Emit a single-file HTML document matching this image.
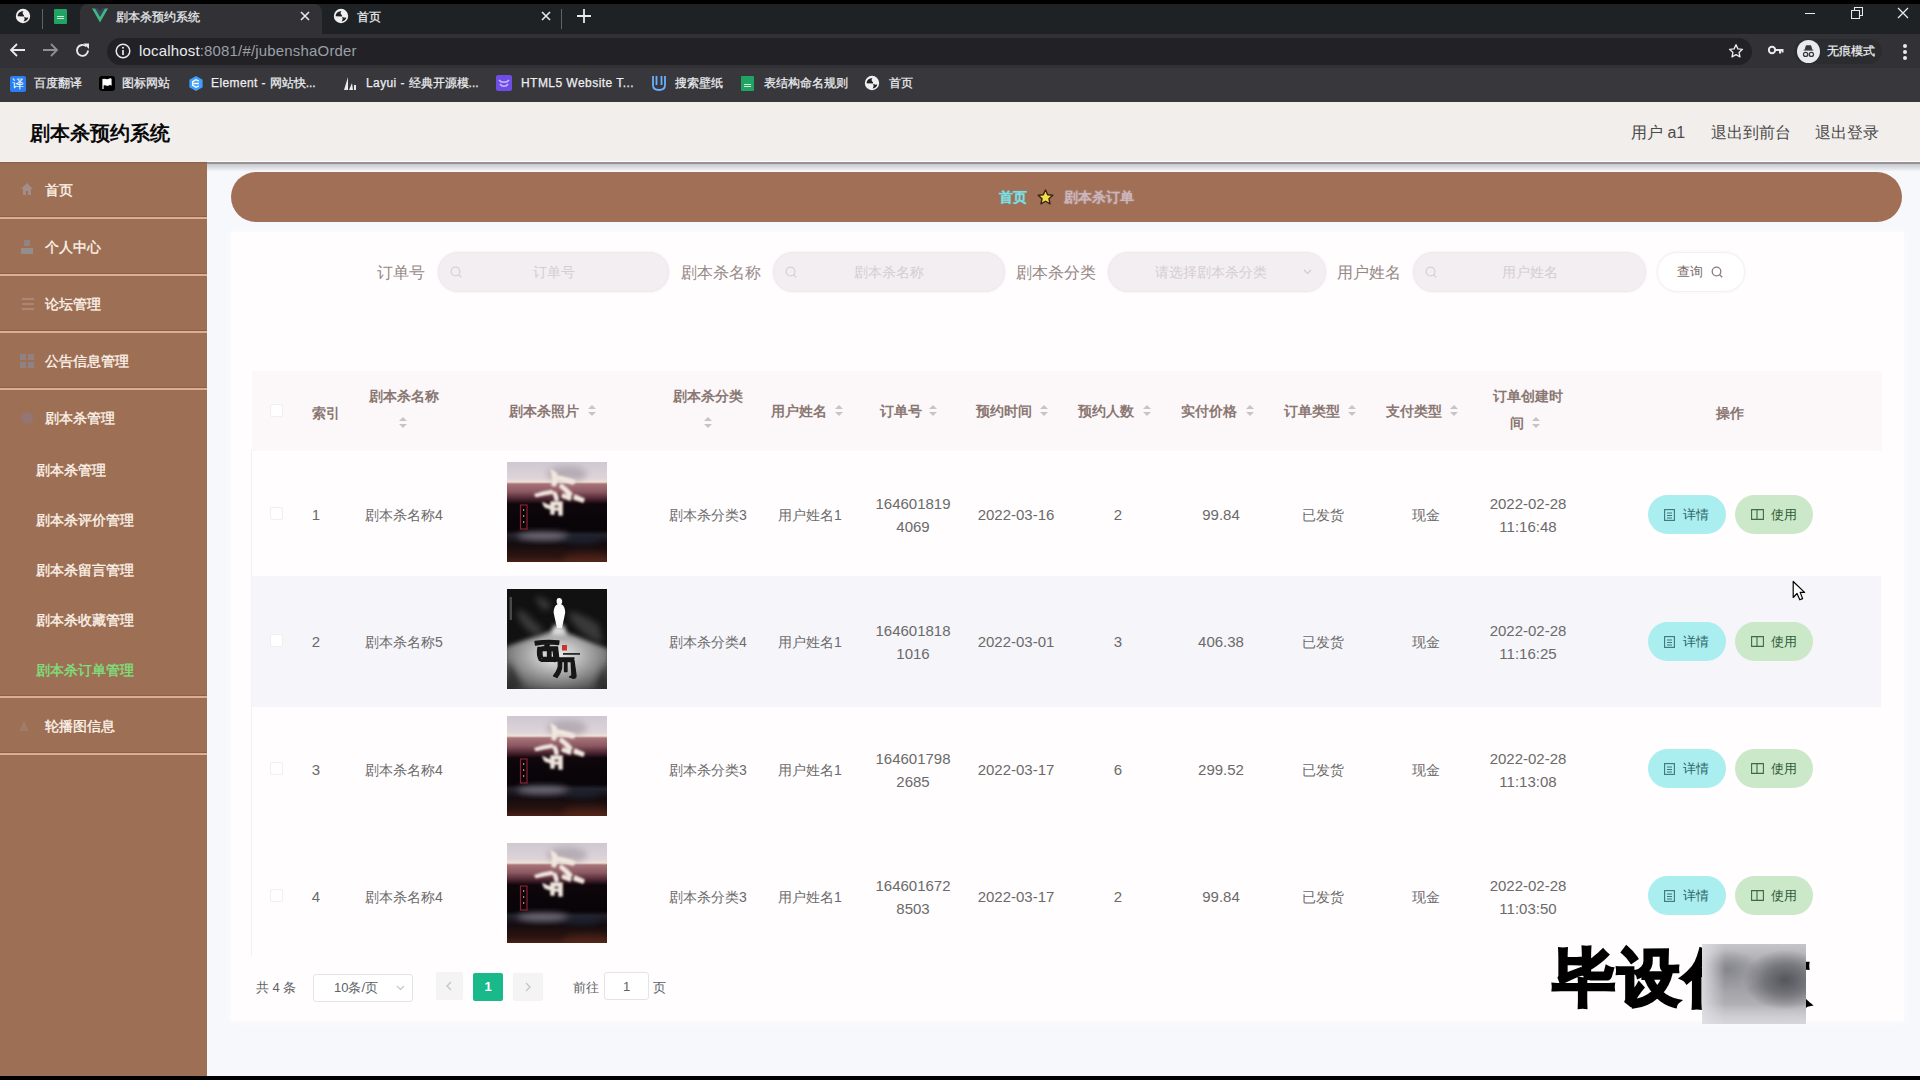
<!DOCTYPE html><html><head><meta charset="utf-8"><style>
*{box-sizing:border-box;margin:0;padding:0}
html,body{width:1920px;height:1080px;overflow:hidden;background:#f7f8fc;font-family:"Liberation Sans",sans-serif;position:relative}
.a{position:absolute;white-space:nowrap}
.ct{position:absolute;white-space:nowrap;color:#eceef0;font-size:12px;line-height:12px;-webkit-text-stroke:.25px currentColor}
.mi{position:absolute;white-space:nowrap;color:#fdf3ea;font-size:14px;line-height:14px;-webkit-text-stroke:.35px currentColor}
.sep{position:absolute;left:0;width:207px;height:2px;background:#dcae93;box-shadow:0 -1px 0 #8e5e47}
.lbl{position:absolute;white-space:nowrap;color:#958886;font-size:16px;line-height:16px}
.inp{position:absolute;height:40px;border-radius:20px;background:#f3eef1;border:1px solid #efe9ec;box-shadow:0 0 3px #f0eaee}
.ph{position:absolute;white-space:nowrap;color:#d6cdd1;font-size:14px;line-height:14px;text-align:center}
.th{position:absolute;white-space:nowrap;color:#8a7773;font-size:14px;font-weight:bold;line-height:14px}
.td{position:absolute;white-space:nowrap;color:#6a6a6a;font-size:14px;line-height:14px;text-align:center;width:140px}
.num{font-size:15px;line-height:15px}
.sort{position:absolute;width:8px;height:11px}
.sort:before{content:"";position:absolute;left:0;top:0;border-left:4px solid transparent;border-right:4px solid transparent;border-bottom:4px solid #c8c3c5}
.sort:after{content:"";position:absolute;left:0;top:7px;border-left:4px solid transparent;border-right:4px solid transparent;border-top:4px solid #c8c3c5}
.cb{position:absolute;width:13px;height:13px;border:1px solid #f1eef0;border-radius:2px;background:#fff}
.img{position:absolute;width:100px;height:100px;overflow:hidden}
.btn{position:absolute;height:39px;width:78px;border-radius:20px}
.bt{position:absolute;white-space:nowrap;font-size:13px;line-height:13px}
</style></head><body>
<div class="a" style="left:0;top:0;width:1920px;height:102px;background:#38373c"></div>
<div class="a" style="left:0;top:0;width:1920px;height:34px;background:#1f2225"></div>
<div class="a" style="left:0;top:34px;width:1920px;height:34px;background:#323236"></div>
<div class="a" style="left:0;top:0;width:1920px;height:4px;background:#000"></div>
<div class="a" style="left:80px;top:4px;width:242px;height:31px;background:#323236;border-radius:8px 8px 0 0"></div>
<div class="a" style="left:42px;top:9px;width:1px;height:20px;background:#5f6368"></div>
<div class="a" style="left:561px;top:9px;width:1px;height:20px;background:#5f6368"></div>
<svg class="a" style="left:15px;top:8px" width="16" height="16" viewBox="0 0 16 16"><circle cx="8" cy="8" r="7.2" fill="#f0f0f0"/><path d="M2.6 8.3C2.8 5.2 5 3.1 8.6 3c-1 1-1.4 2.4-.3 3.6.7.8 1 1.3.6 1.9z" fill="#202124"/><path d="M8.9 8.6c.9.9 2.6 1.3 4.4.9-.4 2.2-2 3.7-4.8 3.9 1.3-1.2 1.5-2.8.4-4.8z" fill="#202124"/></svg>
<div class="a" style="left:54px;top:9px;width:13px;height:15px;background:#1fa463;border-radius:1px"></div>
<div class="a" style="left:57px;top:16px;width:7px;height:1px;background:#d0f0dc"></div><div class="a" style="left:57px;top:18px;width:7px;height:1px;background:#d0f0dc"></div>
<svg class="a" style="left:92px;top:8px" width="16" height="15" viewBox="0 0 16 14"><path d="M0 0h3.2L8 8.2 12.8 0H16L8 14z" fill="#41b883"/><path d="M3.2 0h2.9L8 3.3 9.9 0h2.9L8 8.2z" fill="#35495e"/></svg>
<div class="ct" style="left:116px;top:11px;color:#e8eaed">剧本杀预约系统</div>
<svg class="a" style="left:300px;top:11px" width="10" height="10"><path d="M1 1L9 9M9 1L1 9" stroke="#e8eaed" stroke-width="1.6"/></svg>
<svg class="a" style="left:333px;top:8px" width="16" height="16" viewBox="0 0 16 16"><circle cx="8" cy="8" r="7.2" fill="#f0f0f0"/><path d="M2.6 8.3C2.8 5.2 5 3.1 8.6 3c-1 1-1.4 2.4-.3 3.6.7.8 1 1.3.6 1.9z" fill="#202124"/><path d="M8.9 8.6c.9.9 2.6 1.3 4.4.9-.4 2.2-2 3.7-4.8 3.9 1.3-1.2 1.5-2.8.4-4.8z" fill="#202124"/></svg>
<div class="ct" style="left:357px;top:11px">首页</div>
<svg class="a" style="left:541px;top:11px" width="10" height="10"><path d="M1 1L9 9M9 1L1 9" stroke="#e8eaed" stroke-width="1.6"/></svg>
<svg class="a" style="left:577px;top:9px" width="14" height="14"><path d="M7 0v14M0 7h14" stroke="#e8eaed" stroke-width="1.8"/></svg>
<div class="a" style="left:1805px;top:13px;width:10px;height:1px;background:#e8eaed"></div>
<svg class="a" style="left:1851px;top:7px" width="12" height="12"><path d="M0.5 3.5h8v8h-8z M3.5 3.5v-3h8v8h-3" stroke="#e8eaed" stroke-width="1.1" fill="none"/></svg>
<svg class="a" style="left:1897px;top:7px" width="12" height="12"><path d="M1 1L11 11M11 1L1 11" stroke="#e8eaed" stroke-width="1.3"/></svg>
<svg class="a" style="left:9px;top:42px" width="17" height="16" viewBox="0 0 17 16"><path d="M16 8H2M8 2L2 8l6 6" stroke="#e8eaed" stroke-width="1.8" fill="none"/></svg>
<svg class="a" style="left:42px;top:42px" width="17" height="16" viewBox="0 0 17 16"><path d="M1 8h14M9 2l6 6-6 6" stroke="#8f9094" stroke-width="1.8" fill="none"/></svg>
<svg class="a" style="left:74px;top:42px" width="17" height="17" viewBox="0 0 17 17"><path d="M14 8.5A5.5 5.5 0 1 1 12.2 4.3" stroke="#e8eaed" stroke-width="1.9" fill="none"/><path d="M9.5 1.5h5.5v5.5z" fill="#e8eaed"/></svg>
<div class="a" style="left:107px;top:38px;width:1645px;height:27px;border-radius:14px;background:#222126"></div>
<svg class="a" style="left:115px;top:43px" width="16" height="16" viewBox="0 0 16 16"><circle cx="8" cy="8" r="6.8" stroke="#e8eaed" stroke-width="1.5" fill="none"/><path d="M8 7v5" stroke="#e8eaed" stroke-width="1.7"/><circle cx="8" cy="4.7" r="1" fill="#e8eaed"/></svg>
<div class="a" style="left:139px;top:43px;font-size:15px;line-height:15px;letter-spacing:.17px;color:#e8eaed">localhost<span style="color:#9aa0a6">:8081/#/jubenshaOrder</span></div>
<svg class="a" style="left:1728px;top:43px" width="16" height="16" viewBox="0 0 24 24"><path d="M12 2.5l2.9 6.3 6.8.7-5.1 4.6 1.4 6.8L12 17.4l-6 3.5 1.4-6.8-5.1-4.6 6.8-.7z" stroke="#e8eaed" stroke-width="2" fill="none" stroke-linejoin="round"/></svg>
<svg class="a" style="left:1768px;top:45px" width="16" height="11" viewBox="0 0 16 11"><circle cx="4" cy="5" r="3.2" stroke="#e8eaed" stroke-width="2" fill="none"/><path d="M7 5h8.5M12 5v3.5M14.5 5v2.5" stroke="#e8eaed" stroke-width="2"/></svg>
<div class="a" style="left:1794px;top:39px;width:88px;height:25px;border-radius:13px;background:#2b2c2f"></div>
<svg class="a" style="left:1797px;top:40px" width="23" height="23" viewBox="0 0 24 24"><circle cx="12" cy="12" r="12" fill="#e8eaed"/><path d="M7 10.5h10M8.5 10l1.2-4h4.6l1.2 4z" stroke="#35363a" fill="#35363a" stroke-width="1"/><circle cx="9" cy="15" r="2.2" stroke="#35363a" stroke-width="1.3" fill="none"/><circle cx="15" cy="15" r="2.2" stroke="#35363a" stroke-width="1.3" fill="none"/></svg>
<div class="ct" style="left:1827px;top:45px">无痕模式</div>
<div class="a" style="left:1903px;top:44px;width:4px;height:4px;border-radius:2px;background:#e8eaed"></div><div class="a" style="left:1903px;top:50px;width:4px;height:4px;border-radius:2px;background:#e8eaed"></div><div class="a" style="left:1903px;top:56px;width:4px;height:4px;border-radius:2px;background:#e8eaed"></div>
<div class="a" style="left:10px;top:76px;width:16px;height:16px;background:#2a7ff0;border-radius:2px;color:#fff;font-size:12px;line-height:16px;text-align:center">译</div>
<div class="ct" style="left:34px;top:77px">百度翻译</div>
<svg class="a" style="left:99px;top:76px" width="16" height="15" viewBox="0 0 16 15"><rect width="16" height="15" rx="3" fill="#000"/><path d="M4 3v10M4 3.5c2-1 3.5 1 5.5 0s2.5-.3 2.5-.3v5.5s-1-.5-2.5.3-3.5-1-5.5 0" stroke="#fff" stroke-width="1.2" fill="#fff"/></svg>
<div class="ct" style="left:122px;top:77px">图标网站</div>
<svg class="a" style="left:188px;top:75px" width="16" height="17" viewBox="0 0 16 18"><path d="M8 1l7 4v8l-7 4-7-4V5z" fill="#409eff"/><path d="M11 6.5L8 5 4.5 7v4L8 13l3-1.5M5.5 9H11" stroke="#fff" stroke-width="1.4" fill="none"/></svg>
<div class="ct" style="left:211px;top:77px"><span style="letter-spacing:.4px">Element - </span>网站快...</div>
<svg class="a" style="left:343px;top:76px" width="14" height="15" viewBox="0 0 14 15"><path d="M1 14L5 1v13z M6 14l3-7 1 7z M11 9h2v5h-2z" fill="#e8eaed"/></svg>
<div class="ct" style="left:366px;top:77px"><span style="letter-spacing:.4px">Layui - </span>经典开源模...</div>
<svg class="a" style="left:496px;top:75px" width="16" height="16" viewBox="0 0 16 16"><rect width="16" height="16" rx="2" fill="#6f4ee8"/><path d="M3 5c2 3 8 3 10 0M4 9c2 3 6 3 8 0" stroke="#c8b8ff" stroke-width="1.5" fill="none"/></svg>
<div class="ct" style="left:521px;top:77px;letter-spacing:.45px">HTML5 Website T...</div>
<svg class="a" style="left:651px;top:75px" width="16" height="16" viewBox="0 0 16 16"><path d="M2 1v9c0 3 2 5 6 5s6-2 6-5V1M5.5 1v9M10.5 1v9" stroke="#6ab0ff" stroke-width="1.8" fill="none"/></svg>
<div class="ct" style="left:675px;top:77px">搜索壁纸</div>
<div class="a" style="left:741px;top:76px;width:13px;height:15px;background:#1fa463;border-radius:1px"></div><div class="a" style="left:744px;top:84px;width:7px;height:1px;background:#d0f0dc"></div><div class="a" style="left:744px;top:86px;width:7px;height:1px;background:#d0f0dc"></div>
<div class="ct" style="left:764px;top:77px">表结构命名规则</div>
<svg class="a" style="left:864px;top:75px" width="16" height="16" viewBox="0 0 16 16"><circle cx="8" cy="8" r="7.2" fill="#f0f0f0"/><path d="M2.6 8.3C2.8 5.2 5 3.1 8.6 3c-1 1-1.4 2.4-.3 3.6.7.8 1 1.3.6 1.9z" fill="#202124"/><path d="M8.9 8.6c.9.9 2.6 1.3 4.4.9-.4 2.2-2 3.7-4.8 3.9 1.3-1.2 1.5-2.8.4-4.8z" fill="#202124"/></svg>
<div class="ct" style="left:889px;top:77px">首页</div>
<div class="a" style="left:0;top:102px;width:1920px;height:60px;background:#f2eeec"></div>
<div class="a" style="left:207px;top:161px;width:1713px;height:1px;background:#fdfbfa"></div>
<div class="a" style="left:207px;top:162px;width:1713px;height:2px;background:#979297"></div>
<div class="a" style="left:207px;top:164px;width:1713px;height:7px;background:linear-gradient(#c4c7cc,#f3f4f7)"></div>
<div class="a" style="left:30px;top:123px;font-size:20px;line-height:20px;font-weight:bold;color:#0a0a0a">剧本杀预约系统</div>
<div class="a" style="left:1631px;top:125px;font-size:16px;line-height:16px;color:#4a4a4a">用户 a1</div>
<div class="a" style="left:1711px;top:125px;font-size:16px;line-height:16px;color:#4a4a4a">退出到前台</div>
<div class="a" style="left:1815px;top:125px;font-size:16px;line-height:16px;color:#4a4a4a">退出登录</div>
<div class="a" style="left:0;top:162px;width:207px;height:914px;background:#9d7055"></div>
<div class="a" style="left:0;top:162px;width:207px;height:2px;background:linear-gradient(#84604c,#9d7055)"></div>
<div class="sep" style="top:217px"></div>
<div class="sep" style="top:274px"></div>
<div class="sep" style="top:331px"></div>
<div class="sep" style="top:388px"></div>
<div class="sep" style="top:696px"></div>
<div class="sep" style="top:753px"></div>
<div class="mi" style="left:45px;top:183px">首页</div>
<div class="mi" style="left:45px;top:240px">个人中心</div>
<div class="mi" style="left:45px;top:297px">论坛管理</div>
<div class="mi" style="left:45px;top:354px">公告信息管理</div>
<div class="mi" style="left:45px;top:411px">剧本杀管理</div>
<div class="mi" style="left:45px;top:719px">轮播图信息</div>
<div class="mi" style="left:36px;top:463px;color:#fdf3ea">剧本杀管理</div>
<div class="mi" style="left:36px;top:513px;color:#fdf3ea">剧本杀评价管理</div>
<div class="mi" style="left:36px;top:563px;color:#fdf3ea">剧本杀留言管理</div>
<div class="mi" style="left:36px;top:613px;color:#fdf3ea">剧本杀收藏管理</div>
<div class="mi" style="left:36px;top:663px;color:#7de07c">剧本杀订单管理</div>
<svg class="a" style="left:20px;top:182px;filter:blur(.7px)" width="14" height="14" viewBox="0 0 14 14"><path d="M7 1L1 7h2v6h3V9h2v4h3V7h2z" fill="#a49aa0" opacity=".7"/></svg>
<svg class="a" style="left:21px;top:240px;filter:blur(.7px)" width="12" height="14" viewBox="0 0 12 14"><rect x="3" y="0" width="6" height="6" fill="#8e8a96" opacity=".7"/><rect x="0" y="8" width="12" height="6" fill="#8e9aa6" opacity=".7"/></svg>
<svg class="a" style="left:22px;top:297px;filter:blur(.7px)" width="12" height="14" viewBox="0 0 12 14"><path d="M0 2h12M0 7h12M0 12h12" stroke="#b09080" stroke-width="2" opacity=".7"/></svg>
<svg class="a" style="left:20px;top:354px;filter:blur(.7px)" width="14" height="14" viewBox="0 0 14 14"><rect x="0" y="0" width="6" height="6" fill="#8a8a96" opacity=".7"/><rect x="8" y="0" width="6" height="6" fill="#8a8a96" opacity=".7"/><rect x="0" y="8" width="6" height="6" fill="#8a8a96" opacity=".7"/><rect x="8" y="8" width="6" height="6" fill="#8a8a96" opacity=".7"/></svg>
<svg class="a" style="left:20px;top:411px;filter:blur(.7px)" width="14" height="14" viewBox="0 0 14 14"><circle cx="7" cy="7" r="6" fill="#8c7a8a" opacity=".55"/></svg>
<svg class="a" style="left:17px;top:719px;filter:blur(.7px)" width="14" height="14" viewBox="0 0 14 14"><path d="M7 2L2 12h10z" fill="#a08878" opacity=".5"/></svg>
<div class="a" style="left:231px;top:172px;width:1671px;height:50px;border-radius:25px;background:#a06f56"></div>
<div class="a" style="left:999px;top:190px;font-size:14px;line-height:14px;font-weight:bold;color:#7ddfe0;text-shadow:0 0 1px #70c8d0">首页</div>
<svg class="a" style="left:1037px;top:189px" width="17" height="17" viewBox="0 0 24 24"><path d="M12 1.5l3.1 6.6 7.2.8-5.4 4.9 1.5 7.1L12 17.3 5.6 20.9l1.5-7.1L1.7 8.9l7.2-.8z" fill="#f4df4e" stroke="#3a2410" stroke-width="2" stroke-linejoin="round"/></svg>
<div class="a" style="left:1064px;top:190px;font-size:14px;line-height:14px;font-weight:bold;color:rgba(210,190,200,.75);text-shadow:0 0 1.5px rgba(200,180,190,.8)">剧本杀订单</div>
<div class="a" style="left:231px;top:232px;width:1673px;height:789px;background:#fffdfe;box-shadow:0 0 6px 1px #fbfcfe"></div>
<div class="lbl" style="left:377px;top:265px">订单号</div>
<div class="lbl" style="left:681px;top:265px">剧本杀名称</div>
<div class="lbl" style="left:1016px;top:265px">剧本杀分类</div>
<div class="lbl" style="left:1337px;top:265px">用户姓名</div>
<div class="inp" style="left:438px;top:252px;width:231px"></div>
<svg class="a" style="left:450px;top:266px" width="12" height="12" viewBox="0 0 12 12"><circle cx="5.5" cy="5.5" r="4.3" stroke="#d8d0d4" stroke-width="1.3" fill="none"/><path d="M8.6 8.6l2.6 2.6" stroke="#d8d0d4" stroke-width="1.3"/></svg>
<div class="ph" style="left:468px;top:265px;width:171px">订单号</div>
<div class="inp" style="left:773px;top:252px;width:232px"></div>
<svg class="a" style="left:785px;top:266px" width="12" height="12" viewBox="0 0 12 12"><circle cx="5.5" cy="5.5" r="4.3" stroke="#d8d0d4" stroke-width="1.3" fill="none"/><path d="M8.6 8.6l2.6 2.6" stroke="#d8d0d4" stroke-width="1.3"/></svg>
<div class="ph" style="left:803px;top:265px;width:172px">剧本杀名称</div>
<div class="inp" style="left:1413px;top:252px;width:233px"></div>
<svg class="a" style="left:1425px;top:266px" width="12" height="12" viewBox="0 0 12 12"><circle cx="5.5" cy="5.5" r="4.3" stroke="#d8d0d4" stroke-width="1.3" fill="none"/><path d="M8.6 8.6l2.6 2.6" stroke="#d8d0d4" stroke-width="1.3"/></svg>
<div class="ph" style="left:1443px;top:265px;width:173px">用户姓名</div>
<div class="inp" style="left:1108px;top:252px;width:218px"></div>
<div class="ph" style="left:1130px;top:265px;width:161px">请选择剧本杀分类</div>
<svg class="a" style="left:1303px;top:269px" width="9" height="6"><path d="M1 1l3.5 3.5L8 1" stroke="#d3cacd" stroke-width="1.2" fill="none"/></svg>
<div class="a" style="left:1657px;top:252px;width:88px;height:40px;border-radius:20px;background:#fff;border:1px solid #f4f1f3;box-shadow:0 0 3px #f4f0f2"></div>
<div class="a" style="left:1677px;top:265px;font-size:13px;line-height:14px;color:#7b6a6a">查询</div>
<svg class="a" style="left:1711px;top:266px" width="12" height="12" viewBox="0 0 12 12"><circle cx="5.5" cy="5.5" r="4.3" stroke="#8a7a7c" stroke-width="1.3" fill="none"/><path d="M8.6 8.6l2.6 2.6" stroke="#8a7a7c" stroke-width="1.3"/></svg>
<div class="a" style="left:252px;top:371px;width:1630px;height:80px;background:#fcf7f8"></div>
<div class="cb" style="left:270px;top:404px"></div>
<div class="th" style="left:312px;top:406px">索引</div>
<div class="th" style="left:369px;top:389px">剧本杀名称</div>
<div class="sort" style="left:399px;top:417px"></div>
<div class="th" style="left:509px;top:404px">剧本杀照片</div>
<div class="sort" style="left:588px;top:405px"></div>
<div class="th" style="left:673px;top:389px">剧本杀分类</div>
<div class="sort" style="left:704px;top:417px"></div>
<div class="th" style="left:771px;top:404px">用户姓名</div>
<div class="sort" style="left:835px;top:405px"></div>
<div class="th" style="left:880px;top:404px">订单号</div>
<div class="sort" style="left:929px;top:405px"></div>
<div class="th" style="left:976px;top:404px">预约时间</div>
<div class="sort" style="left:1040px;top:405px"></div>
<div class="th" style="left:1078px;top:404px">预约人数</div>
<div class="sort" style="left:1143px;top:405px"></div>
<div class="th" style="left:1181px;top:404px">实付价格</div>
<div class="sort" style="left:1246px;top:405px"></div>
<div class="th" style="left:1284px;top:404px">订单类型</div>
<div class="sort" style="left:1348px;top:405px"></div>
<div class="th" style="left:1386px;top:404px">支付类型</div>
<div class="sort" style="left:1450px;top:405px"></div>
<div class="th" style="left:1493px;top:389px">订单创建时</div>
<div class="th" style="left:1510px;top:416px">间</div>
<div class="sort" style="left:1532px;top:417px"></div>
<div class="th" style="left:1716px;top:406px">操作</div>
<div class="a" style="left:251px;top:449px;width:1px;height:508px;background:#f1f1f6"></div>
<div class="a" style="left:252px;top:576px;width:1629px;height:131px;background:#f6f5fa"></div>
<div class="cb" style="left:270px;top:507px"></div>
<div class="td num" style="left:246px;top:507px">1</div>
<div class="td" style="left:334px;top:508px">剧本杀名称4</div>
<svg class="a" style="left:507px;top:462px" width="100" height="100" viewBox="0 0 100 100">
<defs><linearGradient id="ga462" x1="0" y1="0" x2="0" y2="1">
<stop offset="0" stop-color="#cfc8d2"/><stop offset=".16" stop-color="#ddd4d8"/><stop offset=".2" stop-color="#eee0d8"/><stop offset=".22" stop-color="#a8747a"/>
<stop offset=".3" stop-color="#8a5660"/><stop offset=".37" stop-color="#4a2430"/><stop offset=".42" stop-color="#0e060a"/><stop offset=".68" stop-color="#080408"/>
<stop offset=".73" stop-color="#24222c"/><stop offset=".82" stop-color="#140c10"/><stop offset=".94" stop-color="#2a1410"/><stop offset="1" stop-color="#4a2018"/></linearGradient>
<filter id="fa462" x="-20%" y="-20%" width="140%" height="140%"><feGaussianBlur stdDeviation=".9"/></filter>
<filter id="fm462" x="-50%" y="-50%" width="200%" height="200%"><feGaussianBlur stdDeviation="3"/></filter></defs>
<rect width="100" height="100" fill="url(#ga462)"/>
<ellipse cx="60" cy="12" rx="20" ry="8" fill="#9a909a" opacity=".55" filter="url(#fm462)"/>
<ellipse cx="36" cy="74" rx="26" ry="4.5" fill="#8a8694" opacity=".7" filter="url(#fm462)"/>
<ellipse cx="75" cy="78" rx="18" ry="4" fill="#1e2a3a" opacity=".6" filter="url(#fm462)"/>
<ellipse cx="80" cy="97" rx="25" ry="6" fill="#6a3020" opacity=".4" filter="url(#fm462)"/>
<g fill="#f2e8e0" stroke="#efe4dc" stroke-width="1.6" stroke-linejoin="round" filter="url(#fa462)">
<path d="M28 32.5c5-2 11-3.5 17-4l1 2.5c-6 1-12 2.5-17 3.5z"/>
<path d="M44 8l5 3c2 4 1 9-1 13l-3-1c1-4 1-9-1-15z"/>
<path d="M50 14c6 1 12 2 18 5l-2 3c-5-2-11-3-16-4z"/>
<path d="M54 22c4 3 8 6 11 10l-3 2c-3-4-6-7-9-9z"/>
<path d="M48 30c2 2 3 5 3 8l-3 0c0-2-1-5-2-7z M56 32l8 3-1 3-8-3z M68 33l9 4-1 3-9-3z"/>
<path d="M36 41l7 3 1 3-6-2z M44 40h11v3H47v9h-3z M52 41h3v12h-3z M46 46h5v2h-5z"/>
</g>
<rect x="13.5" y="43" width="6.5" height="24" fill="none" stroke="#8a2030" stroke-width="1.2"/>
<path d="M16.7 47v2M16.7 53v2M16.7 59v2" stroke="#c8a0a8" stroke-width="1"/>
</svg>
<div class="td" style="left:638px;top:508px">剧本杀分类3</div>
<div class="td" style="left:740px;top:508px">用户姓名1</div>
<div class="td num" style="left:843px;top:496px">164601819</div>
<div class="td num" style="left:843px;top:519px">4069</div>
<div class="td num" style="left:946px;top:507px">2022-03-16</div>
<div class="td num" style="left:1048px;top:507px">2</div>
<div class="td num" style="left:1151px;top:507px">99.84</div>
<div class="td" style="left:1253px;top:508px">已发货</div>
<div class="td" style="left:1356px;top:508px">现金</div>
<div class="td num" style="left:1458px;top:496px">2022-02-28</div>
<div class="td num" style="left:1458px;top:519px">11:16:48</div>
<div class="btn" style="left:1648px;top:495px;background:#abeef0"></div>
<svg class="a" style="left:1664px;top:509px" width="11" height="12" viewBox="0 0 11 12"><rect x=".6" y=".6" width="9.8" height="10.8" fill="none" stroke="#3d7478" stroke-width="1.1"/><path d="M3 4h5M3 6.5h5M3 9h5" stroke="#3d7478" stroke-width="1"/></svg>
<div class="bt" style="left:1683px;top:508px;color:#2e6468">详情</div>
<div class="btn" style="left:1735px;top:495px;background:#cbe8c9"></div>
<svg class="a" style="left:1751px;top:509px" width="13" height="11" viewBox="0 0 13 11"><path d="M.6 .6h5.4v9.8H.6z M6 .6h6.4v9.8H6z" fill="none" stroke="#3e6a44" stroke-width="1.1"/></svg>
<div class="bt" style="left:1771px;top:508px;color:#2f5a36">使用</div>
<div class="cb" style="left:270px;top:634px"></div>
<div class="td num" style="left:246px;top:634px">2</div>
<div class="td" style="left:334px;top:635px">剧本杀名称5</div>
<svg class="a" style="left:507px;top:589px" width="100" height="100" viewBox="0 0 100 100">
<defs><radialGradient id="gb589" cx=".5" cy=".42" r=".7"><stop offset="0" stop-color="#f2f2f2"/><stop offset=".25" stop-color="#c8c8c8"/><stop offset=".6" stop-color="#888"/><stop offset="1" stop-color="#333"/></radialGradient>
<filter id="fb589" x="-30%" y="-30%" width="160%" height="160%"><feGaussianBlur stdDeviation="2"/></filter><filter id="fs589" x="-30%" y="-30%" width="160%" height="160%"><feGaussianBlur stdDeviation="3"/></filter><filter id="fc589" x="-30%" y="-30%" width="160%" height="160%"><feGaussianBlur stdDeviation=".7"/></filter></defs>
<rect width="100" height="100" fill="#111"/>
<path d="M50 40L-2 58v44h104V60z" fill="url(#gb589)" filter="url(#fb589)"/>
<path d="M12 20c8 4 14 12 24 20l-4 8c-10-4-18-12-22-22z M62 22c10 2 22 8 30 14l4 18c-12-2-22-10-32-22z M30 8c6 0 12 4 14 10l-6 4c-4-4-8-8-10-14z" fill="#555" opacity=".6" filter="url(#fs589)"/>
<path d="M0 72c8 8 12 18 16 28H0z M100 74c-6 8-10 16-12 26h12z" fill="#222" opacity=".75" filter="url(#fs589)"/>
<path d="M52 9c2.2 0 3.2 1.8 3.2 3.6 0 1.3-.6 2.2-1 2.7 2.6 1 4 4 4 8.5L55 39h-5l-3.4-15.2c0-4.5 1.5-7.5 4-8.5-.4-.5-1-1.4-1-2.7C49.6 10.8 50 9 52 9z" fill="#fbfbfb" filter="url(#fc589)"/>
<path d="M47 36h10l3 10H44z" fill="#f0f0f0" opacity=".85" filter="url(#fb589)"/>
<g fill="#151515" stroke="#151515" stroke-width="1.3" stroke-linejoin="round" filter="url(#fc589)">
<path d="M28 52.5c8-1.2 16-1.5 24-.5l-.5 3.5c-8-1-15-.8-23 .5z M38 55h4.5l-2 6.5h-2.5z M31 58.5c-1 5-.5 9.5 1.5 13l3.5-1.2c-1.2-4-1.5-8-.5-11.8z M35 58h15.5l1.5 13.5-4.5 1-1.5-11h-11z M40.5 60.5h3.5v9h-3.5z M34 68.5h15v3.8H34z"/>
<path d="M50 69c2.5 5 1.5 12-3.5 18l3.5 1.5c5-6 6-13 3.5-19.5z M54 69h13l-1 3.5H54z M57.5 72.5h2.5v10h-2.5z M64 71l3 .5 2 15c.3 2.5-1.5 3.5-4 2.5l-2.5-1 2.5-1.5z"/></g>
<rect x="55" y="56" width="5" height="5.5" fill="#c83030" filter="url(#fc589)"/>
<rect x="56" y="64" width="17" height="1.8" fill="#2a2a2a"/>
<rect x="2.5" y="8" width="2.5" height="23" fill="#777" opacity=".55"/>
</svg>
<div class="td" style="left:638px;top:635px">剧本杀分类4</div>
<div class="td" style="left:740px;top:635px">用户姓名1</div>
<div class="td num" style="left:843px;top:623px">164601818</div>
<div class="td num" style="left:843px;top:646px">1016</div>
<div class="td num" style="left:946px;top:634px">2022-03-01</div>
<div class="td num" style="left:1048px;top:634px">3</div>
<div class="td num" style="left:1151px;top:634px">406.38</div>
<div class="td" style="left:1253px;top:635px">已发货</div>
<div class="td" style="left:1356px;top:635px">现金</div>
<div class="td num" style="left:1458px;top:623px">2022-02-28</div>
<div class="td num" style="left:1458px;top:646px">11:16:25</div>
<div class="btn" style="left:1648px;top:622px;background:#abeef0"></div>
<svg class="a" style="left:1664px;top:636px" width="11" height="12" viewBox="0 0 11 12"><rect x=".6" y=".6" width="9.8" height="10.8" fill="none" stroke="#3d7478" stroke-width="1.1"/><path d="M3 4h5M3 6.5h5M3 9h5" stroke="#3d7478" stroke-width="1"/></svg>
<div class="bt" style="left:1683px;top:635px;color:#2e6468">详情</div>
<div class="btn" style="left:1735px;top:622px;background:#cbe8c9"></div>
<svg class="a" style="left:1751px;top:636px" width="13" height="11" viewBox="0 0 13 11"><path d="M.6 .6h5.4v9.8H.6z M6 .6h6.4v9.8H6z" fill="none" stroke="#3e6a44" stroke-width="1.1"/></svg>
<div class="bt" style="left:1771px;top:635px;color:#2f5a36">使用</div>
<div class="cb" style="left:270px;top:762px"></div>
<div class="td num" style="left:246px;top:762px">3</div>
<div class="td" style="left:334px;top:763px">剧本杀名称4</div>
<svg class="a" style="left:507px;top:716px" width="100" height="100" viewBox="0 0 100 100">
<defs><linearGradient id="ga716" x1="0" y1="0" x2="0" y2="1">
<stop offset="0" stop-color="#cfc8d2"/><stop offset=".16" stop-color="#ddd4d8"/><stop offset=".2" stop-color="#eee0d8"/><stop offset=".22" stop-color="#a8747a"/>
<stop offset=".3" stop-color="#8a5660"/><stop offset=".37" stop-color="#4a2430"/><stop offset=".42" stop-color="#0e060a"/><stop offset=".68" stop-color="#080408"/>
<stop offset=".73" stop-color="#24222c"/><stop offset=".82" stop-color="#140c10"/><stop offset=".94" stop-color="#2a1410"/><stop offset="1" stop-color="#4a2018"/></linearGradient>
<filter id="fa716" x="-20%" y="-20%" width="140%" height="140%"><feGaussianBlur stdDeviation=".9"/></filter>
<filter id="fm716" x="-50%" y="-50%" width="200%" height="200%"><feGaussianBlur stdDeviation="3"/></filter></defs>
<rect width="100" height="100" fill="url(#ga716)"/>
<ellipse cx="60" cy="12" rx="20" ry="8" fill="#9a909a" opacity=".55" filter="url(#fm716)"/>
<ellipse cx="36" cy="74" rx="26" ry="4.5" fill="#8a8694" opacity=".7" filter="url(#fm716)"/>
<ellipse cx="75" cy="78" rx="18" ry="4" fill="#1e2a3a" opacity=".6" filter="url(#fm716)"/>
<ellipse cx="80" cy="97" rx="25" ry="6" fill="#6a3020" opacity=".4" filter="url(#fm716)"/>
<g fill="#f2e8e0" stroke="#efe4dc" stroke-width="1.6" stroke-linejoin="round" filter="url(#fa716)">
<path d="M28 32.5c5-2 11-3.5 17-4l1 2.5c-6 1-12 2.5-17 3.5z"/>
<path d="M44 8l5 3c2 4 1 9-1 13l-3-1c1-4 1-9-1-15z"/>
<path d="M50 14c6 1 12 2 18 5l-2 3c-5-2-11-3-16-4z"/>
<path d="M54 22c4 3 8 6 11 10l-3 2c-3-4-6-7-9-9z"/>
<path d="M48 30c2 2 3 5 3 8l-3 0c0-2-1-5-2-7z M56 32l8 3-1 3-8-3z M68 33l9 4-1 3-9-3z"/>
<path d="M36 41l7 3 1 3-6-2z M44 40h11v3H47v9h-3z M52 41h3v12h-3z M46 46h5v2h-5z"/>
</g>
<rect x="13.5" y="43" width="6.5" height="24" fill="none" stroke="#8a2030" stroke-width="1.2"/>
<path d="M16.7 47v2M16.7 53v2M16.7 59v2" stroke="#c8a0a8" stroke-width="1"/>
</svg>
<div class="td" style="left:638px;top:763px">剧本杀分类3</div>
<div class="td" style="left:740px;top:763px">用户姓名1</div>
<div class="td num" style="left:843px;top:751px">164601798</div>
<div class="td num" style="left:843px;top:774px">2685</div>
<div class="td num" style="left:946px;top:762px">2022-03-17</div>
<div class="td num" style="left:1048px;top:762px">6</div>
<div class="td num" style="left:1151px;top:762px">299.52</div>
<div class="td" style="left:1253px;top:763px">已发货</div>
<div class="td" style="left:1356px;top:763px">现金</div>
<div class="td num" style="left:1458px;top:751px">2022-02-28</div>
<div class="td num" style="left:1458px;top:774px">11:13:08</div>
<div class="btn" style="left:1648px;top:749px;background:#abeef0"></div>
<svg class="a" style="left:1664px;top:763px" width="11" height="12" viewBox="0 0 11 12"><rect x=".6" y=".6" width="9.8" height="10.8" fill="none" stroke="#3d7478" stroke-width="1.1"/><path d="M3 4h5M3 6.5h5M3 9h5" stroke="#3d7478" stroke-width="1"/></svg>
<div class="bt" style="left:1683px;top:762px;color:#2e6468">详情</div>
<div class="btn" style="left:1735px;top:749px;background:#cbe8c9"></div>
<svg class="a" style="left:1751px;top:763px" width="13" height="11" viewBox="0 0 13 11"><path d="M.6 .6h5.4v9.8H.6z M6 .6h6.4v9.8H6z" fill="none" stroke="#3e6a44" stroke-width="1.1"/></svg>
<div class="bt" style="left:1771px;top:762px;color:#2f5a36">使用</div>
<div class="cb" style="left:270px;top:889px"></div>
<div class="td num" style="left:246px;top:889px">4</div>
<div class="td" style="left:334px;top:890px">剧本杀名称4</div>
<svg class="a" style="left:507px;top:843px" width="100" height="100" viewBox="0 0 100 100">
<defs><linearGradient id="ga843" x1="0" y1="0" x2="0" y2="1">
<stop offset="0" stop-color="#cfc8d2"/><stop offset=".16" stop-color="#ddd4d8"/><stop offset=".2" stop-color="#eee0d8"/><stop offset=".22" stop-color="#a8747a"/>
<stop offset=".3" stop-color="#8a5660"/><stop offset=".37" stop-color="#4a2430"/><stop offset=".42" stop-color="#0e060a"/><stop offset=".68" stop-color="#080408"/>
<stop offset=".73" stop-color="#24222c"/><stop offset=".82" stop-color="#140c10"/><stop offset=".94" stop-color="#2a1410"/><stop offset="1" stop-color="#4a2018"/></linearGradient>
<filter id="fa843" x="-20%" y="-20%" width="140%" height="140%"><feGaussianBlur stdDeviation=".9"/></filter>
<filter id="fm843" x="-50%" y="-50%" width="200%" height="200%"><feGaussianBlur stdDeviation="3"/></filter></defs>
<rect width="100" height="100" fill="url(#ga843)"/>
<ellipse cx="60" cy="12" rx="20" ry="8" fill="#9a909a" opacity=".55" filter="url(#fm843)"/>
<ellipse cx="36" cy="74" rx="26" ry="4.5" fill="#8a8694" opacity=".7" filter="url(#fm843)"/>
<ellipse cx="75" cy="78" rx="18" ry="4" fill="#1e2a3a" opacity=".6" filter="url(#fm843)"/>
<ellipse cx="80" cy="97" rx="25" ry="6" fill="#6a3020" opacity=".4" filter="url(#fm843)"/>
<g fill="#f2e8e0" stroke="#efe4dc" stroke-width="1.6" stroke-linejoin="round" filter="url(#fa843)">
<path d="M28 32.5c5-2 11-3.5 17-4l1 2.5c-6 1-12 2.5-17 3.5z"/>
<path d="M44 8l5 3c2 4 1 9-1 13l-3-1c1-4 1-9-1-15z"/>
<path d="M50 14c6 1 12 2 18 5l-2 3c-5-2-11-3-16-4z"/>
<path d="M54 22c4 3 8 6 11 10l-3 2c-3-4-6-7-9-9z"/>
<path d="M48 30c2 2 3 5 3 8l-3 0c0-2-1-5-2-7z M56 32l8 3-1 3-8-3z M68 33l9 4-1 3-9-3z"/>
<path d="M36 41l7 3 1 3-6-2z M44 40h11v3H47v9h-3z M52 41h3v12h-3z M46 46h5v2h-5z"/>
</g>
<rect x="13.5" y="43" width="6.5" height="24" fill="none" stroke="#8a2030" stroke-width="1.2"/>
<path d="M16.7 47v2M16.7 53v2M16.7 59v2" stroke="#c8a0a8" stroke-width="1"/>
</svg>
<div class="td" style="left:638px;top:890px">剧本杀分类3</div>
<div class="td" style="left:740px;top:890px">用户姓名1</div>
<div class="td num" style="left:843px;top:878px">164601672</div>
<div class="td num" style="left:843px;top:901px">8503</div>
<div class="td num" style="left:946px;top:889px">2022-03-17</div>
<div class="td num" style="left:1048px;top:889px">2</div>
<div class="td num" style="left:1151px;top:889px">99.84</div>
<div class="td" style="left:1253px;top:890px">已发货</div>
<div class="td" style="left:1356px;top:890px">现金</div>
<div class="td num" style="left:1458px;top:878px">2022-02-28</div>
<div class="td num" style="left:1458px;top:901px">11:03:50</div>
<div class="btn" style="left:1648px;top:876px;background:#abeef0"></div>
<svg class="a" style="left:1664px;top:890px" width="11" height="12" viewBox="0 0 11 12"><rect x=".6" y=".6" width="9.8" height="10.8" fill="none" stroke="#3d7478" stroke-width="1.1"/><path d="M3 4h5M3 6.5h5M3 9h5" stroke="#3d7478" stroke-width="1"/></svg>
<div class="bt" style="left:1683px;top:889px;color:#2e6468">详情</div>
<div class="btn" style="left:1735px;top:876px;background:#cbe8c9"></div>
<svg class="a" style="left:1751px;top:890px" width="13" height="11" viewBox="0 0 13 11"><path d="M.6 .6h5.4v9.8H.6z M6 .6h6.4v9.8H6z" fill="none" stroke="#3e6a44" stroke-width="1.1"/></svg>
<div class="bt" style="left:1771px;top:889px;color:#2f5a36">使用</div>
<div class="a" style="left:256px;top:981px;font-size:13px;line-height:13px;color:#606266">共 4 条</div>
<div class="a" style="left:313px;top:974px;width:100px;height:28px;border:1px solid #e4e4e8;border-radius:3px;background:#fff"></div>
<div class="a" style="left:334px;top:981px;font-size:13px;line-height:13px;color:#606266">10条/页</div>
<svg class="a" style="left:396px;top:985px" width="9" height="6"><path d="M1 1l3.5 3.5L8 1" stroke="#c0c4cc" stroke-width="1.1" fill="none"/></svg>
<div class="a" style="left:436px;top:972px;width:27px;height:28px;background:#f4f4f5;border-radius:2px"></div>
<svg class="a" style="left:445px;top:981px" width="7" height="10"><path d="M6 1L2 5l4 4" stroke="#c0c4cc" stroke-width="1.3" fill="none"/></svg>
<div class="a" style="left:473px;top:973px;width:30px;height:28px;background:#19b98a;border-radius:2px;color:#fff;font-size:13px;font-weight:bold;line-height:28px;text-align:center">1</div>
<div class="a" style="left:513px;top:973px;width:30px;height:28px;background:#f4f4f5;border-radius:2px"></div>
<svg class="a" style="left:525px;top:982px" width="7" height="10"><path d="M1 1l4 4-4 4" stroke="#c0c4cc" stroke-width="1.3" fill="none"/></svg>
<div class="a" style="left:573px;top:981px;font-size:13px;line-height:13px;color:#606266">前往</div>
<div class="a" style="left:604px;top:972px;width:45px;height:28px;border:1px solid #e4e4e8;border-radius:3px;background:#fff;font-size:13px;line-height:28px;text-align:center;color:#606266">1</div>
<div class="a" style="left:653px;top:981px;font-size:13px;line-height:13px;color:#606266">页</div>
<div class="a" style="left:1553px;top:943px;font-size:62px;line-height:70px;font-weight:700;letter-spacing:3px;color:#000;-webkit-text-stroke:3px #000;text-shadow:0 0 2px #fff">毕设代做</div>
<div class="a" style="left:1702px;top:944px;width:104px;height:80px;background:radial-gradient(ellipse 40% 38% at 80% 45%,#55555c 0%,rgba(85,85,92,.6) 50%,rgba(85,85,92,0) 100%),radial-gradient(ellipse 30% 25% at 25% 32%,#85858c 0%,rgba(133,133,140,0) 100%),linear-gradient(180deg,#c6c6ca 0%,#a8a8ae 25%,#a0a0a6 55%,#b0b0b4 75%,#d2d2d6 100%)"></div>
<div class="a" style="left:1702px;top:944px;width:104px;height:80px;background:linear-gradient(90deg,rgba(225,225,229,.85) 0%,rgba(225,225,229,0) 22%),linear-gradient(0deg,rgba(215,215,220,.7) 0%,rgba(215,215,220,0) 25%)"></div>
<svg class="a" style="left:1792px;top:580px" width="15" height="22" viewBox="0 0 15 22"><path d="M1.2 1.5V17.5L5 13.5L7.8 19.8L10.6 18.6L8.2 12.4H12.6Z" fill="#fff" stroke="#000" stroke-width="1.2" stroke-linejoin="round"/></svg>
<div class="a" style="left:0;top:1076px;width:1920px;height:4px;background:#000"></div>
</body></html>
